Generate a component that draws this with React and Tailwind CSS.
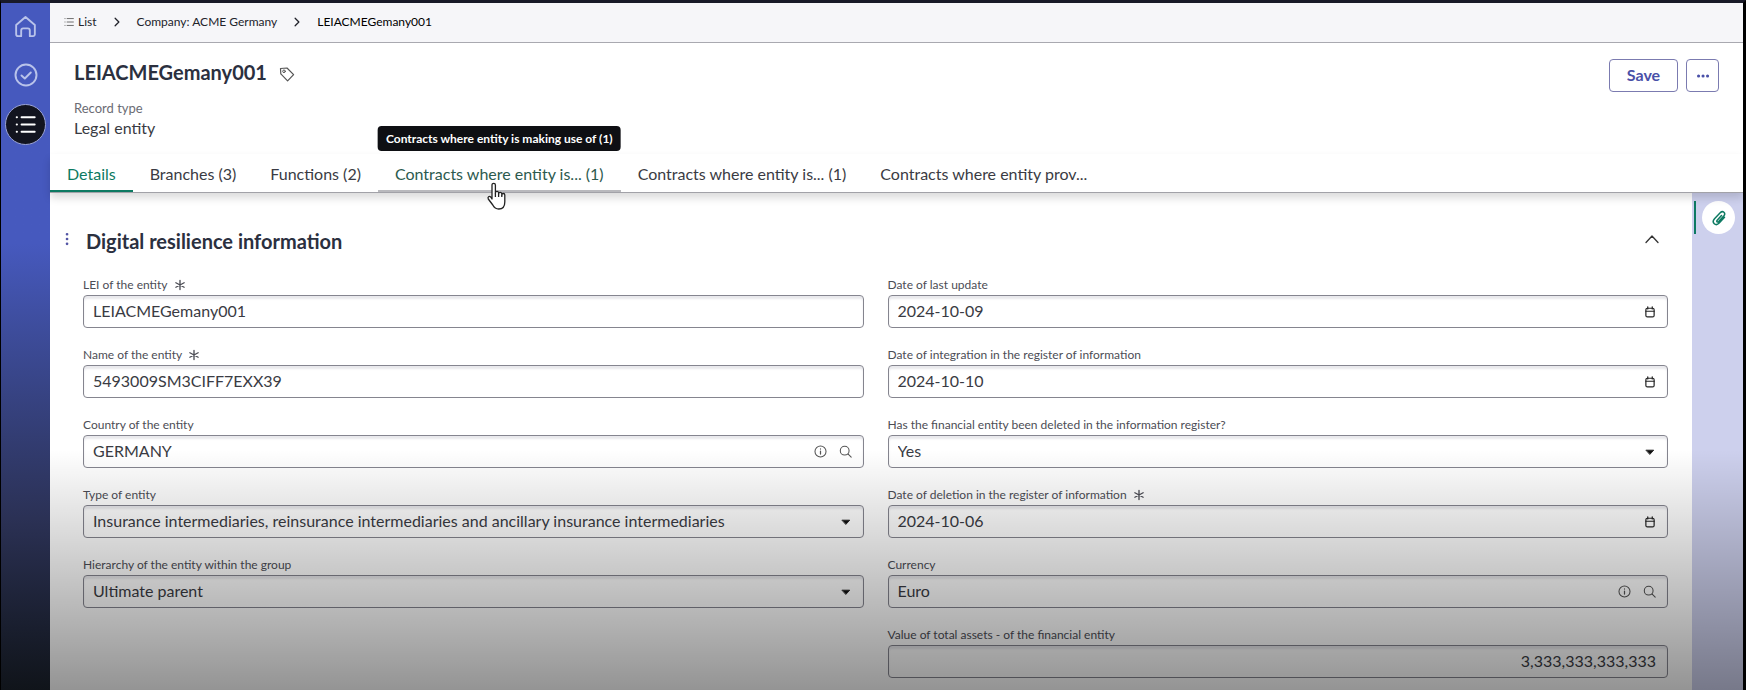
import { useState } from 'react'

const leftFields = [
  { id: "lei", label: "LEI of the entity", required: true, kind: "text", value: "LEIACMEGemany001" },
  { id: "name", label: "Name of the entity", required: true, kind: "text", value: "5493009SM3CIFF7EXX39" },
  { id: "country", label: "Country of the entity", kind: "lookup", value: "GERMANY" },
  { id: "type", label: "Type of entity", kind: "select", value: "Insurance intermediaries, reinsurance intermediaries and ancillary insurance intermediaries" },
  { id: "hierarchy", label: "Hierarchy of the entity within the group", kind: "select", value: "Ultimate parent" },
]

const rightFields = [
  { id: "updated", label: "Date of last update", kind: "date", value: "2024-10-09" },
  { id: "integrated", label: "Date of integration in the register of information", kind: "date", value: "2024-10-10" },
  { id: "deleted", label: "Has the financial entity been deleted in the information register?", kind: "select", value: "Yes" },
  { id: "deletion", label: "Date of deletion in the register of information", required: true, kind: "date", value: "2024-10-06" },
  { id: "currency", label: "Currency", kind: "lookup", value: "Euro" },
  { id: "assets", label: "Value of total assets - of the financial entity", kind: "number", value: "3,333,333,333,333" },
]

const tabs = [
  { label: "Details" },
  { label: "Branches (3)" },
  { label: "Functions (2)" },
  { label: "Contracts where entity is... (1)", tip: "Contracts where entity is making use of (1)" },
  { label: "Contracts where entity is... (1)" },
  { label: "Contracts where entity prov..." },
]

function Icon({ size = 16, children, className = "" }) {
  return (
    <svg width={size} height={size} viewBox="0 0 16 16" fill="none" stroke="currentColor" strokeLinecap="round" strokeLinejoin="round" className={`shrink-0 ${className}`} aria-hidden="true">
      {children}
    </svg>
  )
}

function Chevron() {
  return <Icon size={10}><path d="M5 2l6 6-6 6" strokeWidth="2" /></Icon>
}

function FieldIcons({ kind }) {
  if (kind === "date") {
    return (
      <button type="button" aria-label="Pick a date" className="text-[#222]">
        <Icon size={12}>
          <rect x="2.500" y="3" width="11" height="11.500" rx="2" strokeWidth="1.600" />
          <path d="M2.500 7h11M5 1v3M11 1v3" strokeWidth="1.600" />
        </Icon>
      </button>
    )
  }
  if (kind === "select") {
    return (
      <Icon size={12} className="pointer-events-none text-[#111]">
        <path d="M3 5.500h10L8 11z" fill="currentColor" />
      </Icon>
    )
  }
  if (kind === "lookup") {
    return (
      <>
        <button type="button" aria-label="Preview record" className="text-[#555]">
          <Icon size={13}>
            <circle cx="8" cy="8" r="6.800" strokeWidth="1.300" />
            <path d="M8 7.500v3.700M8 4.800v.2" strokeWidth="1.500" />
          </Icon>
        </button>
        <button type="button" aria-label="Search" className="text-[#555]">
          <Icon size={13}>
            <circle cx="7" cy="7" r="5.400" strokeWidth="1.300" />
            <path d="M11 11l4 4" strokeWidth="1.300" />
          </Icon>
        </button>
      </>
    )
  }
  return null
}

function Field({ field }) {
  const { id, label, required, kind, value } = field
  return (
    <div>
      <label htmlFor={id} className="flex h-5 items-center gap-[6px] text-xs text-[#4c4d55]">
        {label}
        {required && (
          <Icon size={12}>
            <path d="M8 2v12M2.500 5l11 6M13.500 5l-11 6" strokeWidth="1.800" />
          </Icon>
        )}
      </label>
      <div className="flex h-[33px] items-center gap-3 rounded border border-[#85858f] bg-white pr-[11px] shadow-[inset_0_3px_2px_#e9e9ed]">
        {kind === "select" ? (
          <select id={id} defaultValue={value} className="h-full min-w-0 flex-1 appearance-none bg-transparent pb-0.5 pl-[9px] outline-none">
            <option>{value}</option>
          </select>
        ) : (
          <input id={id} type="text" defaultValue={value} className={`h-full min-w-0 flex-1 bg-transparent pb-0.5 pl-[9px] outline-none ${kind === "number" ? "text-right" : ""}`} />
        )}
        <FieldIcons kind={kind} />
      </div>
    </div>
  )
}

function Sidebar() {
  return (
    <nav className="flex w-[49px] shrink-0 flex-col items-center gap-[9px] bg-linear-to-b from-[#4659be] from-35% via-[#2b3155] via-75% to-[#10141a] pt-[3px] text-[#b9c3ea]">
      <a href="#home" aria-label="Home" className="flex h-10 w-10 items-center justify-center">
        <Icon size={23}>
          <path d="M1.500 7L8 1.400 14.500 7v6.400a1.300 1.300 0 0 1-1.300 1.300h-2.200v-4a1.400 1.400 0 0 0-1.400-1.400H6.400A1.400 1.400 0 0 0 5 10.700v4H2.800a1.300 1.300 0 0 1-1.300-1.300z" strokeWidth="1.300" />
        </Icon>
      </a>
      <a href="#tasks" aria-label="Tasks" className="flex h-10 w-10 items-center justify-center">
        <Icon size={24}>
          <circle cx="8" cy="8" r="7" strokeWidth="1.300" />
          <path d="M5 8.300l2.200 2 4-4" strokeWidth="1.300" />
        </Icon>
      </a>
      <a href="#list" aria-label="Lists" className="flex h-[41px] w-[41px] items-center justify-center rounded-full border border-[#9ba4d6] bg-[#12141f] text-white">
        <Icon size={21}>
          <path d="M5 2.500h10M5 8h10M5 13.500h10M1.300 2.500h.2M1.300 8h.2M1.300 13.500h.2" strokeWidth="1.500" />
        </Icon>
      </a>
    </nav>
  )
}

function App() {
  const [active, setActive] = useState(0)
  const [open, setOpen] = useState(true)

  return (
    <div className="flex min-h-screen flex-col border-t-[3px] border-r-[3px] border-l border-t-[#191a28] border-r-black border-l-black bg-white font-[Lato,sans-serif] text-base text-[#3a3b43]">
      <div className="flex flex-1">
        <Sidebar />

        <main className="relative flex min-w-0 flex-1 flex-col">

          {/* Breadcrumb */}
          <nav aria-label="Breadcrumb" className="flex h-10 items-center gap-[15px] border-b border-[#a9a9b0] bg-[#f6f6f9] px-[14px] pb-0.5 text-xs text-[#22232b]">
            <a href="#list" className="flex items-center gap-1">
              <Icon size={10} className="text-[#666]">
                <path d="M5 2.500h10M5 8h10M5 13.500h10M1.500 2.500h.2M1.500 8h.2M1.500 13.500h.2" strokeWidth="1.500" />
              </Icon>
              List
            </a>
            <Chevron />
            <a href="#company">Company: ACME Germany</a>
            <Chevron />
            <span className="text-black">LEIACMEGemany001</span>
          </nav>

          {/* Record header */}
          <header className="flex justify-between pt-4 pr-6 pl-6">
            <div>
              <div className="flex h-7 items-center gap-3 pb-0.5">
                <h1 className="text-xl font-bold text-[#2b303f]">LEIACMEGemany001</h1>
                <button type="button" aria-label="Add tag" className="pt-1 text-[#555]">
                  <Icon size={16}>
                    <path d="M1.500 2.500l.3 5.400 6.800 7 6-6.200L8 2z" strokeWidth="1.200" />
                    <circle cx="5" cy="5.300" r="1.300" strokeWidth="1" />
                  </Icon>
                </button>
              </div>
              <p className="mt-[11px] text-[13px] leading-5 text-[#6b6c74]">Record type</p>
              <p className="leading-5">Legal entity</p>
            </div>
            <div className="flex gap-2">
              <button type="button" className="h-[33px] w-[69px] rounded border border-[#7b7bb0] pb-0.5 font-bold text-[#4a50a8]">Save</button>
              <button type="button" aria-label="More actions" className="flex h-[33px] w-[33px] items-center justify-center rounded border border-[#7b7bb0] text-[#4a50a8]">
                <Icon size={16}>
                  <path d="M3.500 8h.1M8 8h.1M12.500 8h.1" strokeWidth="3" />
                </Icon>
              </button>
            </div>
          </header>

          {/* Tabs */}
          <div role="tablist" className="relative z-10 mt-4 flex border-b border-[#a2a2a8] shadow-[0_5px_8px_rgba(0,0,0,0.14)]">
            {tabs.map((tab, i) => (
              <div key={i} className="relative">
                <button
                  type="button"
                  role="tab"
                  aria-selected={active === i}
                  onClick={() => setActive(i)}
                  className={`h-[38px] border-b-2 px-[17px] pt-1 ${active === i ? "border-[#0d7a62] text-[#0d7a62]" : tab.tip ? "border-[#b9b9bd] text-[#2c5a4e]" : "border-transparent"}`}>
                  {tab.label}
                </button>
                {tab.tip && (
                  <>
                    <span role="tooltip" className="absolute bottom-full left-1/2 mb-[3px] -translate-x-1/2 rounded bg-[#0e0f13] px-2 text-xs leading-[25px] font-bold whitespace-nowrap text-white">{tab.tip}</span>
                    <svg className="absolute top-7 left-1/2 -ml-[14px] h-[28px] w-[24px]" viewBox="0 0 24 28" fill="white" stroke="#222" strokeWidth="1.300" strokeLinejoin="round" aria-hidden="true">
                      <path d="M7 17V3a1.700 1.700 0 0 1 3.400 0v8a1.600 1.600 0 0 1 3.200 0v1a1.600 1.600 0 0 1 3.200 0v1a1.500 1.500 0 0 1 3 0v7c0 4-2 7-6 7-3 0-5-2-6-4l-4.500-6c-1-2 1-3.300 2.400-2z" />
                      <path d="M10.400 11v4M13.600 12v3M16.800 13v2" />
                    </svg>
                  </>
                )}
              </div>
            ))}
          </div>

          <div className="flex flex-1">
            <section className="flex-1 pt-8 pr-6 pl-[15px]">
              <div className="flex h-8 items-center">
                <button type="button" aria-label="Section options" className="pb-1 text-[#5355a5]">
                  <Icon size={14} className="-ml-[5px]">
                    <path d="M8 2.500h.1M8 8h.1M8 13.500h.1" strokeWidth="3" />
                  </Icon>
                </button>
                <h2 className="ml-3 flex-1 text-xl font-bold text-[#2b303f]">Digital resilience information</h2>
                <button type="button" aria-label="Toggle section" aria-expanded={open} onClick={() => setOpen(!open)} className="mr-2 pb-1 text-[#333]">
                  <Icon size={16}>
                    <path d="M2 11.500L8 5l6 6.500" strokeWidth="1.300" />
                  </Icon>
                </button>
              </div>
              {open && (
                <form className="mt-[18px] grid grid-cols-2 gap-6 pl-[18px]">
                  <div className="flex flex-col gap-[17px]">
                    {leftFields.map((f) => <Field key={f.id} field={f} />)}
                  </div>
                  <div className="flex flex-col gap-[17px]">
                    {rightFields.map((f) => <Field key={f.id} field={f} />)}
                  </div>
                </form>
              )}
            </section>

            {/* Attachments rail */}
            <aside className="flex w-[51px] shrink-0 items-start gap-[6px] bg-[#cdd0ed] pt-2 pl-[2px]">
              <span className="h-[33px] w-[2px] bg-[#0d7a62]"></span>
              <button type="button" aria-label="Attachments" className="flex h-[33px] w-[33px] items-center justify-center rounded-full bg-white text-[#0d7a62]">
                <Icon size={16}>
                  <path d="M10.500 5.500l-4.300 4.800c-1 1.200.4 2.400 1.500 1.300l5-5.500c2.600-3-.9-6-3.500-3.300L3.500 8.700c-3.400 4 1.200 8 4.700 4.400l5.300-5.800" strokeWidth="1.500" />
                </Icon>
              </button>
            </aside>
          </div>

          {/* Fade at the foot of the page */}
          <div className="pointer-events-none absolute inset-x-0 bottom-0 h-[240px] bg-linear-to-b from-transparent to-black/42"></div>
        </main>
      </div>
    </div>
  )
}

export default App
